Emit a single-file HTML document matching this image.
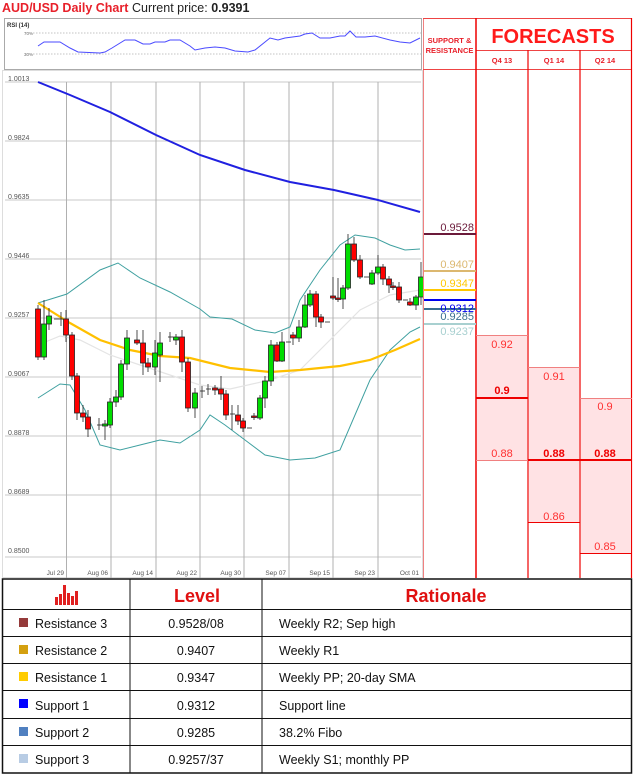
<!DOCTYPE html>
<html><head><meta charset="utf-8"><style>
html,body{margin:0;padding:0;background:#fff;}
svg{display:block;font-family:"Liberation Sans",sans-serif;}
</style></head><body>
<svg width="633" height="778" viewBox="0 0 633 778" xmlns="http://www.w3.org/2000/svg">
<rect width="633" height="778" fill="#fff"/>
<!-- title -->
<text x="2" y="12" font-size="12.5" font-weight="bold" fill="#e8202a">AUD/USD Daily Chart</text>
<text x="132" y="12" font-size="12.5" fill="#222">Current price: <tspan font-weight="bold">0.9391</tspan></text>
<!-- RSI panel -->
<rect x="4.5" y="18.5" width="417" height="51" fill="#fff" stroke="#aaa"/>
<text x="7" y="27" font-size="6" font-weight="bold" fill="#333">RSI (14)</text>
<line x1="33" y1="33" x2="421" y2="33" stroke="#888" stroke-dasharray="1.5,1.5" stroke-width="0.6"/>
<line x1="33" y1="54" x2="421" y2="54" stroke="#888" stroke-dasharray="1.5,1.5" stroke-width="0.6"/>
<text x="24" y="35" font-size="4.5" fill="#666">70%</text>
<text x="24" y="56" font-size="4.5" fill="#666">30%</text>
<polyline fill="none" stroke="#4a4aff" stroke-width="1" points="38,46 44,42 60,42 70,48 78,52 100,53 105,52 112,48 125,40 135,40 143,44 150,44 155,42 165,42 170,40 180,40 190,46 195,50 205,48 215,47 225,48 235,51 248,52 255,50 270,38 278,40 285,38 300,36 305,34 312,33 320,38 330,38 340,36 345,36 350,31 356,37 365,37 375,36 390,40 400,42 410,43 420,38"/>
<!-- chart frame -->
<rect x="2.5" y="70.5" width="420" height="507" fill="#fff" stroke="#ddd"/>
<g stroke="#c8c8c8" stroke-width="1">
<line x1="5" y1="82" x2="421" y2="82"/><line x1="5" y1="141" x2="421" y2="141"/><line x1="5" y1="200" x2="421" y2="200"/><line x1="5" y1="259" x2="421" y2="259"/><line x1="5" y1="318" x2="421" y2="318"/><line x1="5" y1="377" x2="421" y2="377"/><line x1="5" y1="436" x2="421" y2="436"/><line x1="5" y1="495" x2="421" y2="495"/><line x1="5" y1="557" x2="421" y2="557"/>
</g>
<g stroke="#b0b0b0" stroke-width="1">
<line x1="66.5" y1="82" x2="66.5" y2="578"/><line x1="111" y1="82" x2="111" y2="578"/><line x1="156" y1="82" x2="156" y2="578"/><line x1="200" y1="82" x2="200" y2="578"/><line x1="244" y1="82" x2="244" y2="578"/><line x1="289" y1="82" x2="289" y2="578"/><line x1="333" y1="82" x2="333" y2="578"/><line x1="378" y1="82" x2="378" y2="578"/>
</g>
<g font-size="7" fill="#555">
<text x="8" y="81">1.0013</text><text x="8" y="140">0.9824</text><text x="8" y="199">0.9635</text><text x="8" y="258">0.9446</text><text x="8" y="317">0.9257</text><text x="8" y="376">0.9067</text><text x="8" y="435">0.8878</text><text x="8" y="494">0.8689</text><text x="8" y="553">0.8500</text>
</g>
<g font-size="6.5" fill="#555" text-anchor="end">
<text x="64" y="575">Jul 29</text><text x="108" y="575">Aug 06</text><text x="153" y="575">Aug 14</text><text x="197" y="575">Aug 22</text><text x="241" y="575">Aug 30</text><text x="286" y="575">Sep 07</text><text x="330" y="575">Sep 15</text><text x="375" y="575">Sep 23</text><text x="419" y="575">Oct 01</text>
</g>
<!-- indicators -->
<polyline fill="none" stroke="#e4e4e4" stroke-width="1.2" points="38,345 60,336 80,340 110,355 140,365 170,375 200,385 230,389 270,380 300,370 330,340 360,310 390,295 420,290"/>
<polyline fill="none" stroke="#3fa0a0" stroke-width="1" points="38,303 67,294 100,270 118,263 140,278 170,292 200,309 210,317 232,319 255,330 275,333 290,327 300,300 320,270 340,245 355,235 375,238 390,245 405,250 420,249"/>
<polyline fill="none" stroke="#3fa0a0" stroke-width="1" points="38,398 60,384 70,385 85,410 100,445 120,450 140,445 160,440 180,443 200,430 210,415 225,425 245,440 265,455 290,460 315,458 340,450 355,415 370,380 390,350 410,332 420,327"/>
<polyline fill="none" stroke="#ffc000" stroke-width="2.2" points="38,303 70,323 100,340 130,350 160,356 190,358 230,368 270,372 300,370 340,366 370,360 395,350 420,339"/>
<polyline fill="none" stroke="#2020e0" stroke-width="2" points="38,82 70,95 110,112 156,135 200,155 245,170 290,182 334,190 378,200 420,212"/>
<!-- candles -->
<g stroke="#222" stroke-width="0.8">
<line x1="38" y1="305" x2="38" y2="360"/><rect x="35.5" y="309" width="5" height="48" fill="#f00"/>
<line x1="44" y1="300" x2="44" y2="360"/><rect x="41.5" y="324" width="5" height="33" fill="#0d0"/>
<line x1="49" y1="308" x2="49" y2="330"/><rect x="46.5" y="316" width="5" height="8" fill="#0d0"/>
<line x1="54" y1="319" x2="59" y2="319"/><line x1="61" y1="312" x2="61" y2="326"/><line x1="59" y1="319" x2="63" y2="319"/>
<line x1="66" y1="310" x2="66" y2="342"/><rect x="63.5" y="319" width="5" height="16" fill="#f00"/>
<line x1="72" y1="332" x2="72" y2="380"/><rect x="69.5" y="335" width="5" height="41" fill="#f00"/>
<line x1="77" y1="373" x2="77" y2="420"/><rect x="74.5" y="376" width="5" height="37" fill="#f00"/>
<line x1="83" y1="405" x2="83" y2="422"/><rect x="80.5" y="413" width="5" height="4" fill="#f00"/>
<line x1="88" y1="410" x2="88" y2="437"/><rect x="85.5" y="417" width="5" height="12" fill="#f00"/>
<line x1="97" y1="425" x2="102" y2="425"/><line x1="99" y1="418" x2="99" y2="430"/>
<line x1="105" y1="420" x2="105" y2="440"/><rect x="102.5" y="424" width="5" height="2" fill="#0d0"/>
<line x1="110" y1="398" x2="110" y2="428"/><rect x="107.5" y="402" width="5" height="23" fill="#0d0"/>
<line x1="116" y1="390" x2="116" y2="407"/><rect x="113.5" y="397" width="5" height="5" fill="#0d0"/>
<line x1="121" y1="360" x2="121" y2="400"/><rect x="118.5" y="364" width="5" height="33" fill="#0d0"/>
<line x1="127" y1="330" x2="127" y2="370"/><rect x="124.5" y="338" width="5" height="26" fill="#0d0"/>
<line x1="137" y1="330" x2="137" y2="345"/><rect x="134.5" y="340" width="5" height="3" fill="#f00"/>
<line x1="143" y1="330" x2="143" y2="375"/><rect x="140.5" y="343" width="5" height="20" fill="#f00"/>
<line x1="148" y1="358" x2="148" y2="372"/><rect x="145.5" y="363" width="5" height="4" fill="#f00"/>
<line x1="155" y1="340" x2="155" y2="375"/><rect x="152.5" y="353" width="5" height="14" fill="#0d0"/>
<line x1="160" y1="332" x2="160" y2="382"/><rect x="157.5" y="343" width="5" height="12" fill="#0d0"/>
<line x1="168" y1="337" x2="173" y2="337"/><line x1="170" y1="332" x2="170" y2="342"/>
<line x1="176" y1="334" x2="176" y2="345"/><rect x="173.5" y="337" width="5" height="3" fill="#0d0"/>
<line x1="182" y1="330" x2="182" y2="372"/><rect x="179.5" y="337" width="5" height="25" fill="#f00"/>
<line x1="188" y1="358" x2="188" y2="412"/><rect x="185.5" y="362" width="5" height="46" fill="#f00"/>
<line x1="195" y1="388" x2="195" y2="418"/><rect x="192.5" y="393" width="5" height="15" fill="#0d0"/>
<line x1="200" y1="391" x2="205" y2="391"/><line x1="202" y1="386" x2="202" y2="398"/>
<line x1="206" y1="389" x2="211" y2="389"/><line x1="208" y1="384" x2="208" y2="395"/>
<line x1="215" y1="385" x2="215" y2="395"/><rect x="212.5" y="388" width="5" height="2" fill="#f00"/>
<line x1="221" y1="376" x2="221" y2="400"/><rect x="218.5" y="389" width="5" height="5" fill="#f00"/>
<line x1="226" y1="390" x2="226" y2="420"/><rect x="223.5" y="394" width="5" height="21" fill="#f00"/>
<line x1="230" y1="414" x2="235" y2="414"/><line x1="232" y1="405" x2="232" y2="430"/>
<line x1="238" y1="405" x2="238" y2="425"/><rect x="235.5" y="415" width="5" height="6" fill="#f00"/>
<line x1="243" y1="418" x2="243" y2="432"/><rect x="240.5" y="421" width="5" height="7" fill="#f00"/>
<line x1="247" y1="428" x2="252" y2="428"/>
<line x1="254" y1="413" x2="254" y2="420"/><rect x="251.5" y="416" width="5" height="1.5" fill="#f00"/>
<line x1="260" y1="395" x2="260" y2="420"/><rect x="257.5" y="398" width="5" height="20" fill="#0d0"/>
<line x1="265" y1="376" x2="265" y2="408"/><rect x="262.5" y="381" width="5" height="17" fill="#0d0"/>
<line x1="271" y1="340" x2="271" y2="386"/><rect x="268.5" y="345" width="5" height="36" fill="#0d0"/>
<line x1="277" y1="342" x2="277" y2="362"/><rect x="274.5" y="345" width="5" height="16" fill="#f00"/>
<line x1="282" y1="332" x2="282" y2="362"/><rect x="279.5" y="342" width="5" height="19" fill="#0d0"/>
<line x1="286" y1="342" x2="291" y2="342"/>
<line x1="293" y1="332" x2="293" y2="345"/><rect x="290.5" y="335" width="5" height="3" fill="#f00"/>
<line x1="299" y1="320" x2="299" y2="342"/><rect x="296.5" y="327" width="5" height="11" fill="#0d0"/>
<line x1="305" y1="295" x2="305" y2="328"/><rect x="302.5" y="305" width="5" height="22" fill="#0d0"/>
<line x1="310" y1="290" x2="310" y2="307"/><rect x="307.5" y="294" width="5" height="11" fill="#0d0"/>
<line x1="316" y1="291" x2="316" y2="327"/><rect x="313.5" y="294" width="5" height="23" fill="#f00"/>
<line x1="321" y1="314" x2="321" y2="328"/><rect x="318.5" y="317" width="5" height="5" fill="#f00"/>
<line x1="325" y1="322" x2="330" y2="322"/>
<line x1="333" y1="277" x2="333" y2="300"/><rect x="330.5" y="296" width="5" height="2" fill="#f00"/>
<line x1="338" y1="278" x2="338" y2="302"/><rect x="335.5" y="298" width="5" height="1.5" fill="#f00"/>
<line x1="343" y1="285" x2="343" y2="309"/><rect x="340.5" y="288" width="5" height="11" fill="#0d0"/>
<line x1="348" y1="234" x2="348" y2="290"/><rect x="345.5" y="244" width="5" height="44" fill="#0d0"/>
<line x1="354" y1="237" x2="354" y2="262"/><rect x="351.5" y="244" width="5" height="16" fill="#f00"/>
<line x1="360" y1="255" x2="360" y2="279"/><rect x="357.5" y="260" width="5" height="17" fill="#f00"/>
<line x1="364" y1="277" x2="369" y2="277"/>
<line x1="372" y1="270" x2="372" y2="285"/><rect x="369.5" y="273" width="5" height="11" fill="#0d0"/>
<line x1="378" y1="255" x2="378" y2="275"/><rect x="375.5" y="267" width="5" height="6" fill="#0d0"/>
<line x1="383" y1="264" x2="383" y2="285"/><rect x="380.5" y="267" width="5" height="12" fill="#f00"/>
<line x1="389" y1="276" x2="389" y2="293"/><rect x="386.5" y="279" width="5" height="6" fill="#f00"/>
<line x1="393" y1="282" x2="393" y2="290"/><rect x="390.5" y="286" width="5" height="1.5" fill="#f00"/>
<line x1="399" y1="282" x2="399" y2="303"/><rect x="396.5" y="287" width="5" height="13" fill="#f00"/>
<line x1="403" y1="300" x2="408" y2="300"/>
<line x1="410" y1="298" x2="410" y2="306"/><rect x="407.5" y="302" width="5" height="3" fill="#f00"/>
<line x1="416" y1="295" x2="416" y2="310"/><rect x="413.5" y="297" width="5" height="8" fill="#0d0"/>
<line x1="421" y1="262" x2="421" y2="305"/><rect x="418.5" y="277" width="5" height="20" fill="#0d0"/>
</g>
<!-- right panel grid -->
<g stroke="#ee4444" stroke-width="1" fill="none">
<line x1="423.5" y1="18" x2="423.5" y2="578" stroke="#f08080"/>
<line x1="423" y1="18.5" x2="632" y2="18.5"/>
<line x1="476" y1="50.5" x2="632" y2="50.5"/>
<line x1="423" y1="69.5" x2="632" y2="69.5"/>
</g>
<line x1="476" y1="18" x2="476" y2="578" stroke="#e00" stroke-width="1.5"/>
<line x1="528" y1="50" x2="528" y2="578" stroke="#e00" stroke-width="1.2"/>
<line x1="580" y1="50" x2="580" y2="578" stroke="#e00" stroke-width="1.2"/>
<line x1="631.5" y1="18" x2="631.5" y2="578" stroke="#e00" stroke-width="1.2"/>
<g font-size="7.5" font-weight="bold" fill="#e8202a" text-anchor="middle">
<text x="449.5" y="43">SUPPORT &amp;</text><text x="449.5" y="53">RESISTANCE</text>
<text x="502" y="63">Q4 13</text><text x="554" y="63">Q1 14</text><text x="605" y="63">Q2 14</text>
</g>
<text x="553" y="43" font-size="20" font-weight="bold" fill="#ff1a1a" text-anchor="middle">FORECASTS</text>
<!-- S&R levels -->
<g stroke-width="2">
<line x1="424" y1="234" x2="476" y2="234" stroke="#6b1a3a"/>
<line x1="424" y1="271" x2="476" y2="271" stroke="#dcb870"/>
<line x1="424" y1="290" x2="476" y2="290" stroke="#ffc800"/>
<line x1="424" y1="300" x2="476" y2="300" stroke="#0000ee"/>
<line x1="424" y1="309" x2="476" y2="309" stroke="#3a7090"/>
<line x1="424" y1="324" x2="476" y2="324" stroke="#a8d0d0"/>
</g>
<g font-size="11" text-anchor="end">
<text x="474" y="231" fill="#6b1a3a">0.9528</text>
<text x="474" y="268" fill="#dcb870">0.9407</text>
<text x="474" y="287" fill="#ffc800">0.9347</text>
<text x="474" y="312" fill="#0000ee">0.9312</text>
<text x="474" y="320" fill="#3a7090">0.9285</text>
<text x="474" y="335" fill="#a8d0d0">0.9237</text>
</g>
<!-- forecast boxes -->
<rect x="477" y="335" width="50" height="125" fill="#ffe2e4"/>
<rect x="529" y="367" width="50" height="155" fill="#ffe2e4"/>
<rect x="581" y="398" width="50" height="155" fill="#ffe2e4"/>
<g stroke="#f08080" stroke-width="1">
<line x1="476" y1="335.5" x2="528" y2="335.5"/><line x1="476" y1="460.5" x2="528" y2="460.5"/>
<line x1="528" y1="367.5" x2="580" y2="367.5"/><line x1="528" y1="522.5" x2="580" y2="522.5" stroke="#e00"/>
<line x1="580" y1="398.5" x2="632" y2="398.5"/><line x1="580" y1="553.5" x2="632" y2="553.5" stroke="#e00"/>
</g>
<line x1="476" y1="398" x2="528" y2="398" stroke="#e00" stroke-width="2"/>
<line x1="528" y1="460" x2="632" y2="460" stroke="#e00" stroke-width="2"/>
<g font-size="11" fill="#ff3030" text-anchor="middle">
<text x="502" y="348">0.92</text><text x="502" y="394" font-weight="bold" fill="#e00">0.9</text><text x="502" y="457">0.88</text>
<text x="554" y="380">0.91</text><text x="554" y="457" font-weight="bold" fill="#e00">0.88</text><text x="554" y="520">0.86</text>
<text x="605" y="410">0.9</text><text x="605" y="457" font-weight="bold" fill="#e00">0.88</text><text x="605" y="550">0.85</text>
</g>
<!-- table -->
<rect x="2.5" y="579" width="629" height="194" fill="#fff" stroke="#111" stroke-width="1.5"/>
<g stroke="#111" stroke-width="1">
<line x1="130" y1="579" x2="130" y2="773"/><line x1="262" y1="579" x2="262" y2="773"/>
<line x1="2" y1="609.5" x2="632" y2="609.5"/><line x1="2" y1="636.5" x2="632" y2="636.5"/><line x1="2" y1="663.5" x2="632" y2="663.5"/><line x1="2" y1="690.5" x2="632" y2="690.5"/><line x1="2" y1="718.5" x2="632" y2="718.5"/><line x1="2" y1="745.5" x2="632" y2="745.5"/>
</g>
<g fill="#e02020">
<rect x="55" y="597" width="3" height="8"/><rect x="59" y="594" width="3" height="11"/><rect x="63" y="585" width="3" height="20"/><rect x="67" y="593" width="3" height="12"/><rect x="71" y="596" width="3" height="9"/><rect x="75" y="591" width="3" height="14"/>
</g>
<g font-size="18" font-weight="bold" fill="#e01010" text-anchor="middle">
<text x="197" y="602">Level</text><text x="446" y="602">Rationale</text>
</g>
<rect x="19" y="618" width="9" height="9" fill="#953a3a"/>
<rect x="19" y="645" width="9" height="9" fill="#d4a010"/>
<rect x="19" y="672" width="9" height="9" fill="#ffcc00"/>
<rect x="19" y="699" width="9" height="9" fill="#0000ff"/>
<rect x="19" y="727" width="9" height="9" fill="#5080c0"/>
<rect x="19" y="754" width="9" height="9" fill="#b8cce4"/>
<g font-size="12.5" fill="#111">
<text x="35" y="628">Resistance 3</text><text x="35" y="655">Resistance 2</text><text x="35" y="682">Resistance 1</text><text x="35" y="710">Support 1</text><text x="35" y="737">Support 2</text><text x="35" y="764">Support 3</text>
<text x="279" y="628">Weekly R2; Sep high</text><text x="279" y="655">Weekly R1</text><text x="279" y="682">Weekly PP; 20-day SMA</text><text x="279" y="710">Support line</text><text x="279" y="737">38.2% Fibo</text><text x="279" y="764">Weekly S1; monthly PP</text>
</g>
<g font-size="12.5" fill="#111" text-anchor="middle">
<text x="196" y="628">0.9528/08</text><text x="196" y="655">0.9407</text><text x="196" y="682">0.9347</text><text x="196" y="710">0.9312</text><text x="196" y="737">0.9285</text><text x="196" y="764">0.9257/37</text>
</g>
</svg>
</body></html>
